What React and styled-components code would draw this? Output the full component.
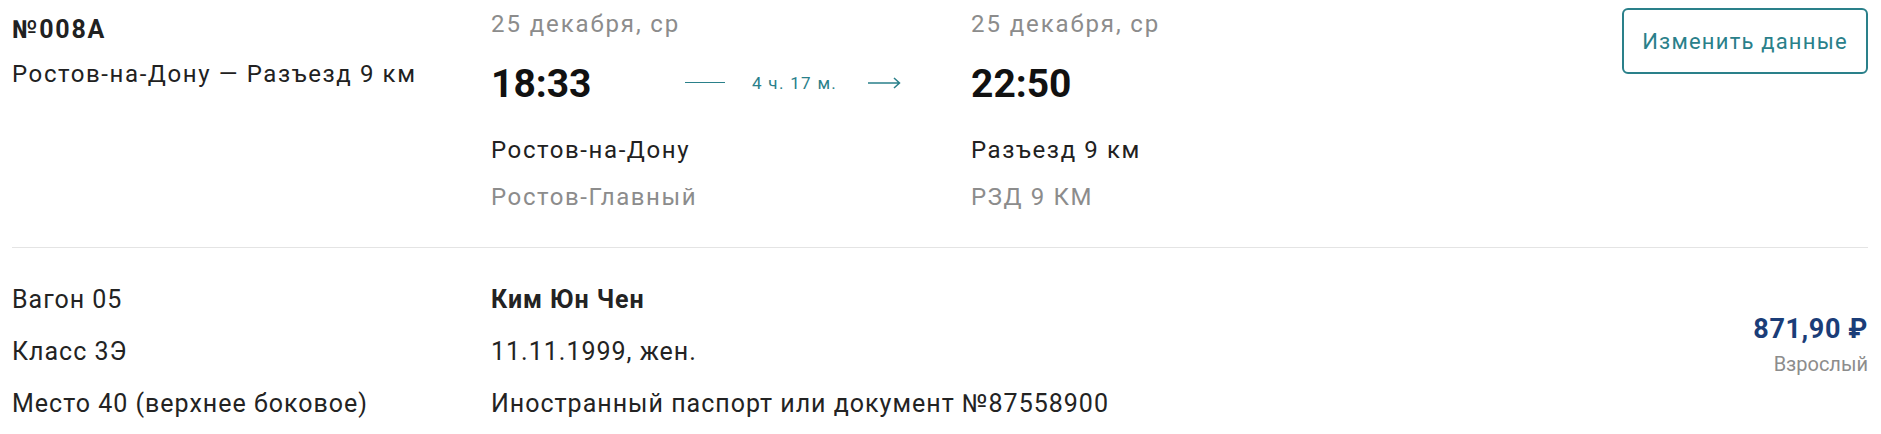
import React from "react";
import styled, { createGlobalStyle } from "styled-components";

const GlobalStyle = createGlobalStyle`
  body {
    margin: 0;
    background: #ffffff;
    font-family: Roboto, "Noto Sans", Arial, sans-serif;
    color: #212121;
  }
`;

const Page = styled.div`
  padding: 0 13px 0 12px;
`;

const TripRow = styled.div`
  display: grid;
  grid-template-columns: 479px 480px 1fr auto;
  padding-top: 8px;
  height: 239px;
  border-bottom: 1px solid #e4e4e4;
`;

const TrainCol = styled.div`
  font-size: 24px;
  line-height: 44px;
  letter-spacing: 1.6px;
`;

const TrainNumber = styled.div`
  font-size: 25px;
  font-weight: 700;
  letter-spacing: 1.8px;
`;

const Point = styled.div`
  display: flex;
  flex-direction: column;
`;

const DateLabel = styled.div`
  font-size: 24px;
  line-height: 32px;
  letter-spacing: 1.9px;
  color: #8c8c8c;
`;

const TimeRow = styled.div`
  display: grid;
  grid-template-columns: 194px auto;
  align-items: center;
  margin-top: 20px;
  height: 48px;
`;

const Time = styled.div`
  font-size: 39px;
  line-height: 48px;
  font-weight: 700;
  color: #111;
`;

const Duration = styled.div`
  display: flex;
  align-items: center;
  color: #2a808a;
  font-size: 17px;
  letter-spacing: 1.3px;
  margin-top: -3px;
`;

const Dash = styled.span`
  width: 40px;
  height: 1.5px;
  background: #2a808a;
  margin-right: 27px;
`;

const DurationText = styled.span`
  margin-right: 31px;
`;

const Stations = styled.div`
  margin-top: 19px;
`;

const StationLine = styled.div`
  font-size: 24px;
  line-height: 47px;
  letter-spacing: 1.6px;
  color: ${p => (p.muted ? "#8c8c8c" : "#212121")};
`;

const EditButton = styled.button`
  width: 246px;
  height: 66px;
  border: 2px solid #2a808a;
  border-radius: 6px;
  background: #fff;
  color: #2a808a;
  font-family: Roboto, "Noto Sans", Arial, sans-serif;
  font-size: 22px;
  letter-spacing: 1.2px;
  cursor: pointer;
`;

const PassengerRow = styled.div`
  display: grid;
  grid-template-columns: 479px 1fr auto;
  padding-top: 26px;
`;

const InfoCol = styled.div`
  font-size: 25px;
  line-height: 52px;
  letter-spacing: 1px;
  color: #232323;
`;

const Name = styled.div`
  font-weight: 700;
  letter-spacing: 0.9px;
`;

const PriceCol = styled.div`
  display: flex;
  flex-direction: column;
  align-items: flex-end;
  padding-top: 38px;
`;

const Price = styled.div`
  font-size: 27px;
  line-height: 34px;
  font-weight: 700;
  letter-spacing: 0.6px;
  color: #1b3d78;
`;

const Fare = styled.div`
  font-size: 20px;
  line-height: 28px;
  color: #8c8c8c;
  margin-top: 4px;
`;

const Arrow = () => (
  <svg width="33" height="12" viewBox="0 0 33 12" fill="none">
    <path d="M0 6H31.5M26 1L31.5 6L26 11" stroke="#2a808a" strokeWidth="1.5" />
  </svg>
);

const TripPoint = ({ date, time, city, station, duration }) => (
  <Point>
    <DateLabel>{date}</DateLabel>
    <TimeRow>
      <Time>{time}</Time>
      {duration && (
        <Duration>
          <Dash />
          <DurationText>{duration}</DurationText>
          <Arrow />
        </Duration>
      )}
    </TimeRow>
    <Stations>
      <StationLine>{city}</StationLine>
      <StationLine muted>{station}</StationLine>
    </Stations>
  </Point>
);

export default function App() {
  return (
    <>
      <GlobalStyle />
      <Page>
        <TripRow>
          <TrainCol>
            <TrainNumber>№008А</TrainNumber>
            <div>Ростов-на-Дону — Разъезд 9 км</div>
          </TrainCol>
          <TripPoint
            date="25 декабря, ср"
            time="18:33"
            city="Ростов-на-Дону"
            station="Ростов-Главный"
            duration="4 ч. 17 м."
          />
          <TripPoint
            date="25 декабря, ср"
            time="22:50"
            city="Разъезд 9 км"
            station="РЗД 9 КМ"
          />
          <div>
            <EditButton>Изменить данные</EditButton>
          </div>
        </TripRow>
        <PassengerRow>
          <InfoCol>
            <div>Вагон 05</div>
            <div>Класс 3Э</div>
            <div>Место 40 (верхнее боковое)</div>
          </InfoCol>
          <InfoCol>
            <Name>Ким Юн Чен</Name>
            <div>11.11.1999, жен.</div>
            <div>Иностранный паспорт или документ №87558900</div>
          </InfoCol>
          <PriceCol>
            <Price>871,90 ₽</Price>
            <Fare>Взрослый</Fare>
          </PriceCol>
        </PassengerRow>
      </Page>
    </>
  );
}
